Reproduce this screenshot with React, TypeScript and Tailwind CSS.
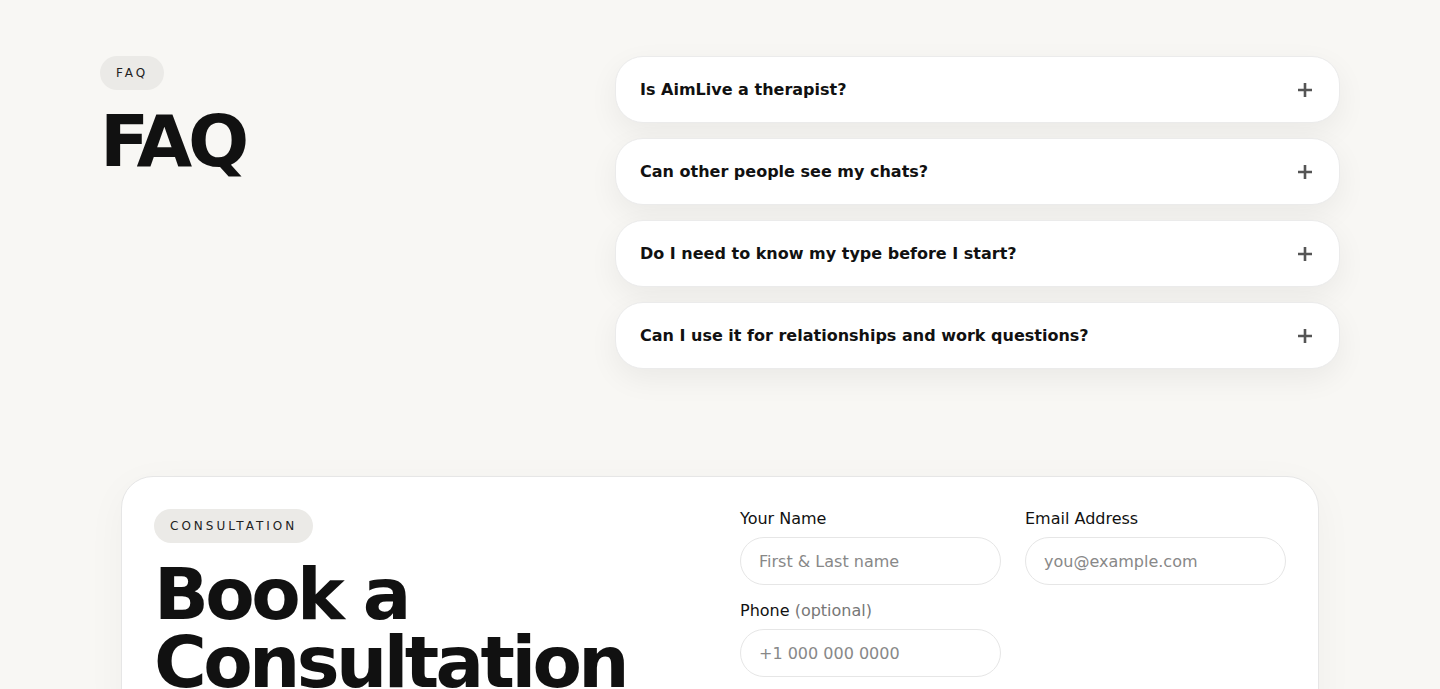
import React, { useState } from 'react';

const faqs = [
  'Is AimLive a therapist?',
  'Can other people see my chats?',
  'Do I need to know my type before I start?',
  'Can I use it for relationships and work questions?',
];

const Tag = ({ children }: { children: React.ReactNode }) => (
  <span className="inline-flex h-[34px] items-center rounded-full bg-[#ebeae7] px-4 text-[12px] uppercase tracking-[0.25em] text-[#222]">
    {children}
  </span>
);

const PlusIcon = () => (
  <svg width="18" height="18" viewBox="0 0 18 18" className="text-[#555]">
    <path d="M9 2v14M2 9h14" stroke="currentColor" strokeWidth="2.6" />
  </svg>
);

const Field = ({ label, hint, placeholder, type = 'text' }: { label: string; hint?: string; placeholder: string; type?: string }) => (
  <label className="flex flex-col">
    <span className="mb-2 text-[16px] leading-5 text-[#111]">
      {label}
      {hint && <span className="text-[#777]"> {hint}</span>}
    </span>
    <input
      type={type}
      placeholder={placeholder}
      className="h-12 w-full rounded-full border border-[#e6e6e6] bg-white px-[18px] text-[16px] text-[#111] outline-none placeholder:text-[#888]"
    />
  </label>
);

export default function App() {
  const [open, setOpen] = useState<number | null>(null);

  return (
    <div className="min-h-screen bg-[#f8f7f4] font-['DejaVu_Sans',sans-serif] text-[#111]">
      <section className="mx-auto flex max-w-[1240px] gap-12 pt-14">
        <div className="w-[467px] shrink-0">
          <Tag>FAQ</Tag>
          <h2 className="mt-[15px] text-[72px] font-bold leading-none tracking-[-0.06em]">FAQ</h2>
        </div>
        <div className="flex flex-1 flex-col gap-[15px]">
          {faqs.map((q, i) => (
            <button
              key={i}
              onClick={() => setOpen(open === i ? null : i)}
              className="flex h-[67px] items-center justify-between rounded-[28px] border border-[#ebebeb] bg-white pl-6 pr-[25px] text-left shadow-[0_10px_30px_rgba(0,0,0,0.06)]"
            >
              <span className="text-[16px] font-bold">{q}</span>
              <PlusIcon />
            </button>
          ))}
        </div>
      </section>

      <section className="mx-auto mt-[107px] max-w-[1200px] px-[1px]">
        <div className="grid grid-cols-2 gap-10 rounded-[32px] border border-[#e6e6e6] bg-white p-8 shadow-[0_10px_40px_rgba(0,0,0,0.04)]">
          <div>
            <Tag>Consultation</Tag>
            <h2 className="mt-[17px] text-[72px] font-bold leading-[0.95] tracking-[-0.05em]">
              Book a Consultation
            </h2>
          </div>
          <div className="grid grid-cols-2 content-start gap-x-6 gap-y-4">
            <Field label="Your Name" placeholder="First & Last name" />
            <Field label="Email Address" placeholder="you@example.com" type="email" />
            <Field label="Phone" hint="(optional)" placeholder="+1 000 000 0000" type="tel" />
          </div>
        </div>
      </section>
    </div>
  );
}
